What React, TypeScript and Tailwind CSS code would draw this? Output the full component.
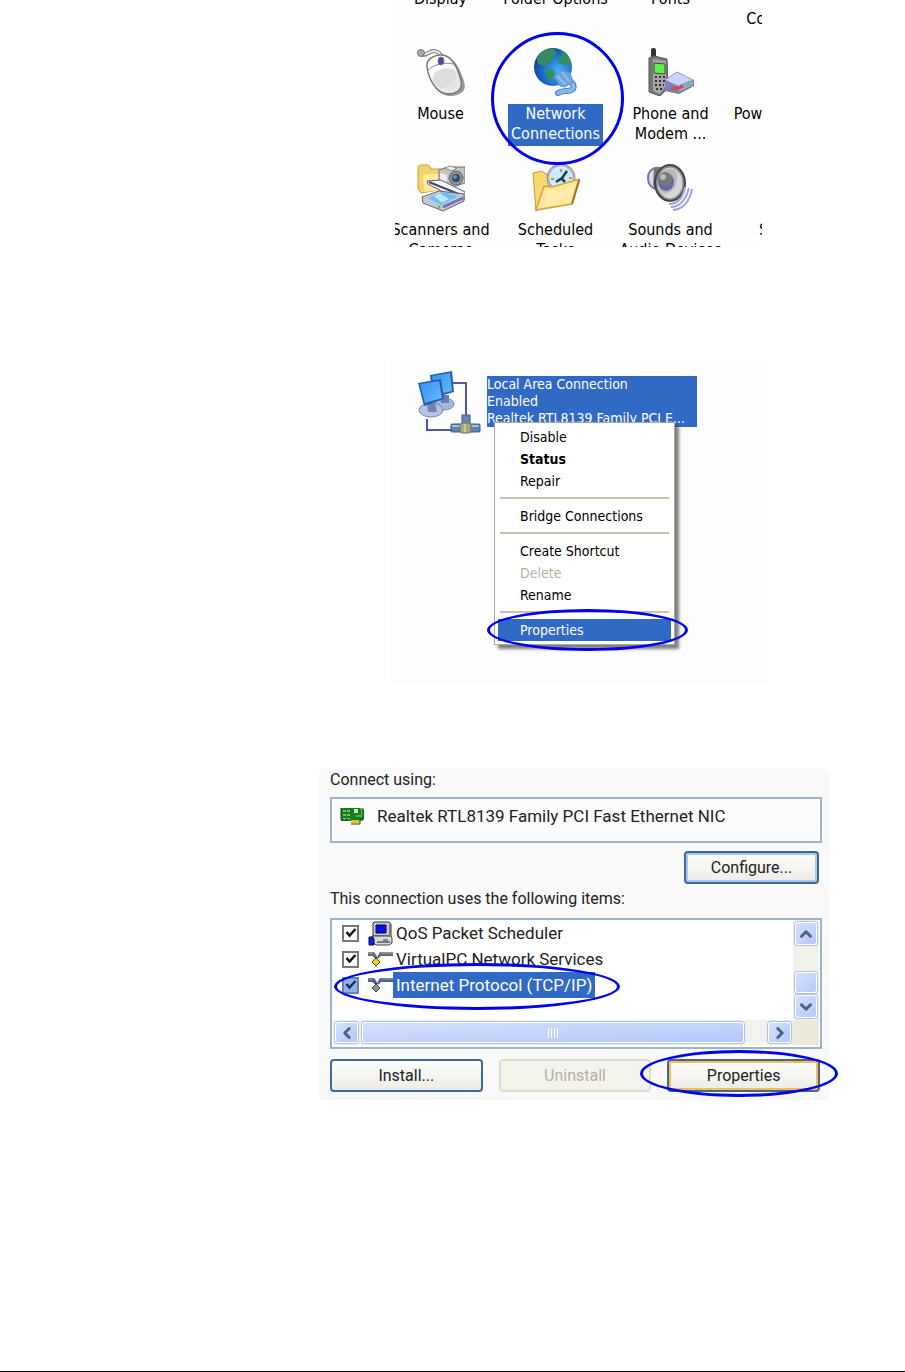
import type { ReactNode } from "react";
import { ChevronDown, ChevronLeft, ChevronRight, ChevronUp } from "lucide-react";
import { clsx } from "clsx";

function MouseIcon() {
  return (
    <svg viewBox="0 0 48 48" className="size-12">
      <defs>
        <linearGradient id="mouseBody" x1="0" y1="0" x2="1" y2="1">
          <stop offset="0.3" stopColor="#fff" />
          <stop offset="0.8" stopColor="#e3e3e3" />
          <stop offset="1" stopColor="#fafafa" />
        </linearGradient>
      </defs>
      <path d="M4 6c4 3 7-2 12-3 5 0 8 3 9 7" fill="none" stroke="#777" strokeWidth="4" />
      <path d="M4 6c4 3 7-2 12-3 5 0 8 3 9 7" fill="none" stroke="#eee" strokeWidth="2" />
      <circle cx="4" cy="5" r="3.5" fill="#aaa" stroke="#777" />
      <path d="M11 19C9 12 16 7 24 8c9 0 14 6 18 16 4 10 6 16 0 20-7 5-18 4-23-3-4-6-6-14-8-22z" fill="#999" transform="translate(2 1)" />
      <path d="M10 19C9 12 16 7 24 7c8 0 13 6 17 16 4 10 5 16 0 20-7 5-17 3-22-3-5-6-8-14-9-21z" fill="url(#mouseBody)" stroke="#777" strokeWidth="1.5" />
      <path d="M11 22c7-6 16-8 26-6" fill="none" stroke="#888" />
      <path d="M17 36c-3-8 0-13 8-15 7-2 13 0 14 5 0 7-5 12-14 15-4 0-6-2-8-5z" fill="#ddd" />
      <ellipse cx="24" cy="13" rx="3" ry="4" fill="#4945b0" stroke="#777" />
    </svg>
  );
}

function GlobeIcon() {
  return (
    <svg viewBox="0 0 48 48" className="size-12">
      <defs>
        <radialGradient id="globe" cx="0.65" cy="0.6" r="0.65">
          <stop offset="0" stopColor="#4cb4fa" />
          <stop offset="0.6" stopColor="#1a73d2" />
          <stop offset="1" stopColor="#16479a" />
        </radialGradient>
      </defs>
      <circle cx="21" cy="19" r="19" fill="url(#globe)" />
      <path d="M5 10C9 3 15 0 22 1l3 5-5 4-1 5-6 3-7-2z" fill="#368b60" />
      <path d="M29 3c5 2 8 6 10 11l-5 5-4-4-3 1-1-5 4-3z" fill="#36925c" />
      <path d="M13 20l9 2 1 5-5 7c-3-4-5-9-5-14z" fill="#319261" />
      <path d="M34 31c6 3 9 6 7 10-4 4-9 0-15 4" fill="none" stroke="#457cb5" strokeWidth="6" strokeLinecap="round" />
      <path d="M34 31c6 3 9 6 7 10-4 4-9 0-15 4" fill="none" stroke="#86b7ea" strokeWidth="4" strokeLinecap="round" />
      <path d="M22 28l8-6 8 3 3 9-8 5-5-1z" fill="#6ba4df" stroke="#5b93d2" />
      <path d="M25 28l8 8m-3-12 7 9" stroke="#94c2ee" strokeWidth="2" />
    </svg>
  );
}

function PhoneIcon() {
  return (
    <svg viewBox="0 0 48 48" className="size-12">
      <rect x="4" y="0" width="5" height="11" rx="2" fill="#333" />
      <path d="M2 10l5-2 13 3 1 29-8 8-11-4z" fill="#777" stroke="#555" />
      <path d="M6 11l13 2v25l-6 8-7-3z" fill="#a5a5a5" />
      <path d="M7 15l11 1v10l-11-1z" fill="#5df246" stroke="#444" />
      <path d="M8 29h10M8 33h10M8 37h9M9 41h6" stroke="#333" strokeWidth="2" strokeDasharray="2 2" />
      <path d="M18 32l12-7 17 7v6L32 46l-14-3z" fill="#777a9c" />
      <path d="M18 32l12-8 16 8-15 6z" fill="#d0d2ff" stroke="#9698ce" />
      <path d="M18 33l13 5v6l-13-2z" fill="#8082bf" />
      <path d="M31 38l15-5v4l-14 7z" fill="#a0a3d4" />
      <path d="M24 41l8-1 4-2" stroke="#d64a34" strokeWidth="3" fill="none" />
      <path d="M40 37l3-1" stroke="#5ad24d" strokeWidth="3" />
    </svg>
  );
}

function ScannerIcon() {
  return (
    <svg viewBox="0 0 48 48" className="size-12">
      <path d="M1 4q0-3 3-3h7l4 4h12v20L4 29l-3-4z" fill="#f5d36b" stroke="#c9a136" />
      <path d="M6 10h20v16L7 28z" fill="#ffe99d" />
      <path d="M22 6l10-3 16 0v16l-15 5-11-5z" fill="#c5c5c5" stroke="#777" />
      <path d="M27 4l6-2 7 2-5 3z" fill="#eee" stroke="#888" />
      <path d="M23 9l7 2v12l-7-4z" fill="#eee" />
      <circle cx="39" cy="14" r="7" fill="#8c9193" stroke="#666" />
      <circle cx="39" cy="14" r="4" fill="#394754" />
      <circle cx="38" cy="13" r="2" fill="#479ad6" />
      <path d="M10 17l14-1 24 12v6l-3 4L11 20z" fill="#f6f6fb" stroke="#5c598d" />
      <path d="M12 18l32 13" stroke="#48465f" strokeWidth="2" />
      <path d="M5 33l17-6 25 3v7L26 47 6 39z" fill="#c6c6d4" stroke="#64646f" />
      <path d="M11 34l14-6 16 4-17 9z" fill="#68c1f5" />
      <path d="M17 32l8 7 7-4-9-6z" fill="#bce8ff" />
      <path d="M26 43l20-9" stroke="#7172bf" strokeWidth="3" />
      <circle cx="22" cy="43" r="1.5" fill="#4c5" />
    </svg>
  );
}

function TasksIcon() {
  return (
    <svg viewBox="0 0 48 48" className="size-12">
      <path d="M1 9l9-2 4 3 20 4-2 20-28 13z" fill="#f9d96f" stroke="#c69a37" />
      <circle cx="29" cy="14" r="14" fill="#b8bdc0" stroke="#858c91" />
      <circle cx="29" cy="14" r="11" fill="#c6ecff" stroke="#f5f5f5" />
      <path d="M29 5v3M19 15h3m15-1h3" stroke="#e6853e" strokeWidth="2" />
      <path d="M24 18l6-4 5-7M29 14l4 4" stroke="#174256" strokeWidth="2.5" fill="none" />
      <path d="M4 46l8-24 8 1 28-8-8 25z" fill="#ffe79a" stroke="#cea342" strokeWidth="1.5" />
      <path d="M16 24l9 4c9 0 12-5 19-8l-6 13-25 10z" fill="#fff1be" opacity="0.6" />
      <path d="M40 40l7-24" stroke="#987532" strokeWidth="2" />
    </svg>
  );
}

function SpeakerIcon() {
  return (
    <svg viewBox="0 0 48 48" className="size-12">
      <path d="M13 4C6 3 1 7 1 14c0 6 3 10 9 11z" fill="#d8d8e6" stroke="#7474b4" strokeWidth="2" />
      <path d="M7 5l17-5-5 37-13-16z" fill="#777" />
      <ellipse cx="23" cy="19" rx="15" ry="18" fill="#8b8b8b" stroke="#454545" strokeWidth="2" />
      <ellipse cx="23" cy="19" rx="12" ry="15" fill="#b9b9b9" stroke="#ddd" />
      <path d="M14 29c8 2 15-3 16-13 1-5-1-8-3-11 8 5 10 17 5 23-5 8-13 8-18 1z" fill="#d6d6d6" />
      <ellipse cx="19" cy="18" rx="8" ry="9" fill="#6768a8" />
      <circle cx="18" cy="15" r="7" fill="#777" />
      <circle cx="16" cy="13" r="3" fill="#bbb" />
      <path d="M22 40c9 0 14-6 16-17M24 43c10 0 15-8 18-19M26 46c11-1 17-10 19-21" fill="none" stroke="#a3a2d8" strokeWidth="2" />
    </svg>
  );
}

function LanIcon() {
  return (
    <svg viewBox="0 0 66 66" className="size-[66px]">
      <defs>
        <linearGradient id="lanScreen" x1="0" y1="0" x2="1" y2="1">
          <stop offset="0" stopColor="#3592f0" />
          <stop offset="1" stopColor="#64bbfb" />
        </linearGradient>
      </defs>
      <path d="M34 12h14v33M9 48v11h25" fill="none" stroke="#50569f" strokeWidth="2" />
      <ellipse cx="26" cy="33" rx="10" ry="6" fill="#a3b8da" stroke="#7388b7" />
      <path d="M22 24h9v8h-8z" fill="#637eb6" />
      <path d="M12 4l22-4 2 21-21 6z" fill="#285da9" />
      <path d="M14 5l18-3 2 18-18 4z" fill="url(#lanScreen)" />
      <ellipse cx="13" cy="39" rx="12" ry="7" fill="#b3c4df" stroke="#7388b7" />
      <path d="M9 32h8l2 9h-9z" fill="#6f83b5" />
      <path d="M0 12l23-4 3 20-20 7z" fill="#295ca6" />
      <path d="M2 13l19-3 3 17-17 5z" fill="url(#lanScreen)" />
      <rect x="44" y="44" width="8" height="12" fill="#6588b4" stroke="#3d5b85" />
      <rect x="33" y="53" width="29" height="8" rx="1" fill="#5d83b3" stroke="#385981" />
      <path d="M34 55h27" stroke="#a7c2df" strokeWidth="2" />
      <rect x="42" y="52" width="11" height="10" rx="2" fill="#a4a783" stroke="#707958" />
      <path d="M47 53v8" stroke="#d0ca9a" strokeWidth="2" />
    </svg>
  );
}

function CardIcon() {
  return (
    <svg viewBox="0 0 25 18" className="h-[18px] w-[25px] shrink-0">
      <path d="M1 1h22l1 2v9l-4 2H1z" fill="#177b20" />
      <path d="M3 3h3v2H3zm4 0h3v2H7zm-4 4h3v2H3zm4 0h3v2H7zm-4 4h3v2H3zm4 0h3v2H7z" fill="#73c45c" />
      <path d="M14 2h4v4h-4z" fill="#bdebac" />
      <path d="M20 2h2v7h-6" fill="none" stroke="#49ba3e" strokeWidth="2" />
      <path d="M11 13h9v3h-9z" fill="#e5c321" />
      <path d="M23 2v11h-3v4h-9M1 1v12h9" fill="none" stroke="#164b1b" />
    </svg>
  );
}

function SchedulerIcon() {
  return (
    <svg viewBox="0 0 25 25" className="size-[25px] shrink-0">
      <path d="M6 1h15l2 2v12H5V2z" fill="#c9c9c9" stroke="#333" />
      <path d="M8 4h10v8H8z" fill="#0716df" stroke="#000078" />
      <path d="M4 15h19l1 2v5l-3 2H8l-4-4z" fill="#dadada" stroke="#444" />
      <path d="M22 3v13M9 21h13" stroke="#777" strokeWidth="2" />
      <path d="M15 19h5" stroke="#333" />
      <path d="M1 16h4l1 2v6H1z" fill="#0824ca" stroke="#00007c" />
    </svg>
  );
}

function ProtocolIcon({ selected }: { selected?: boolean }) {
  const bar = selected ? "#50618e" : "#6b6b6b";
  return (
    <svg viewBox="0 0 25 16" className="h-4 w-[25px] shrink-0">
      <path d="M0 1h6l3 4-2 2-3-2H0z" fill={bar} />
      <path d="M12 1h13v4H13l-3 3-1-2z" fill={bar} />
      <path d="M0 2h5M13 2h12" stroke={selected ? "#8fa2c4" : "#b5b5b5"} />
      <path d="M8 6v4" stroke="#222" strokeWidth="2" />
      <path
        d="M8 7l4 4-4 4-4-4z"
        fill={selected ? "#7b9a90" : "#f0d51c"}
        stroke="#44482b"
      />
    </svg>
  );
}

function Ring({ className }: { className: string }) {
  return (
    <span
      className={clsx(
        "pointer-events-none absolute z-20 rounded-[50%] border-3 border-[#0000ee]",
        className
      )}
    />
  );
}

const folders: { lines: string[]; icon?: ReactNode; selected?: boolean }[] = [
  { lines: ["Mouse"], icon: <MouseIcon /> },
  { lines: ["Network", "Connections"], icon: <GlobeIcon />, selected: true },
  { lines: ["Phone and", "Modem ..."], icon: <PhoneIcon /> },
  { lines: ["Power Options"] },
  { lines: ["Scanners and", "Cameras"], icon: <ScannerIcon /> },
  { lines: ["Scheduled", "Tasks"], icon: <TasksIcon /> },
  { lines: ["Sounds and", "Audio Devices"], icon: <SpeakerIcon /> },
  { lines: ["Speech"] },
];

function Label({ lines, selected }: { lines: string[]; selected?: boolean }) {
  return (
    <span
      className={clsx(
        "block px-[3px] whitespace-nowrap",
        selected && "bg-[#316ac5] pb-0.5 text-white"
      )}
    >
      {lines.map((line) => (
        <span key={line} className="block">
          {line}
        </span>
      ))}
    </span>
  );
}

function ControlPanel() {
  return (
    <section className="h-[247px] w-[367px] max-w-full overflow-hidden bg-[#fefefe] text-base leading-5">
      <div className="-mt-[11px] -ml-3 grid w-[460px] grid-cols-4 text-center">
        <Label lines={["Display"]} />
        <Label lines={["Folder Options"]} />
        <Label lines={["Fonts"]} />
        <Label lines={["Game", "Controllers"]} />
      </div>
      <div className="mt-[19px] -ml-3 grid w-[460px] grid-cols-4 gap-y-5">
        {folders.map((item) => (
          <button
            key={item.lines[0]}
            className="relative flex h-24 flex-col items-center gap-2"
          >
            <span className="size-12 shrink-0">{item.icon}</span>
            <Label lines={item.lines} selected={item.selected} />
            {item.selected && <Ring className="-top-4 -left-[7px] size-[133px]" />}
          </button>
        ))}
      </div>
    </section>
  );
}

const menuGroups = [
  ["Disable", "Status", "Repair"],
  ["Bridge Connections"],
  ["Create Shortcut", "Delete", "Rename"],
  ["Properties"],
];

function ContextMenu() {
  return (
    <div
      role="menu"
      className="absolute top-[46px] left-[7px] z-10 w-[181px] border border-[#aca899] bg-white p-[3px] text-sm text-black shadow-[4px_4px_3px_#00000080]"
    >
      {menuGroups.map((group, i) => (
        <div key={group[0]}>
          {i > 0 && <hr className="mx-0.5 mt-[5px] mb-1.5 border-t-2 border-[#c5c2b2]" />}
          {group.map((item) => (
            <button
              key={item}
              role="menuitem"
              disabled={item === "Delete"}
              className={clsx(
                "relative block h-[22px] w-full pl-[22px] text-left leading-[22px]",
                item === "Status" && "font-bold",
                item === "Delete" && "text-[#b5b2a3]",
                item === "Properties" && "bg-[#316ac5] text-white"
              )}
            >
              {item}
              {item === "Properties" && (
                <Ring className="-top-2.5 -left-[11px] h-[42px] w-[201px]" />
              )}
            </button>
          ))}
        </div>
      ))}
    </div>
  );
}

function ConnectionPanel() {
  return (
    <section className="mt-[111px] flex h-[326px] w-[379px] max-w-full gap-[3px] bg-[#fdfdfd] pt-[13px] pl-[29px]">
      <LanIcon />
      <div className="relative mt-[5px] h-[51px] w-[210px] bg-[#316ac5] text-sm leading-[17px] whitespace-nowrap text-white">
        <p>Local Area Connection</p>
        <p>Enabled</p>
        <p>Realtek RTL8139 Family PCI E...</p>
        <ContextMenu />
      </div>
    </section>
  );
}

const components = [
  { id: "qos", name: "QoS Packet Scheduler", icon: <SchedulerIcon /> },
  { id: "vpc", name: "VirtualPC Network Services", icon: <ProtocolIcon /> },
  { id: "tcp", name: "Internet Protocol (TCP/IP)", icon: <ProtocolIcon selected />, selected: true },
];

const scrollButton =
  "flex shrink-0 items-center justify-center rounded-[3px] border border-white bg-linear-to-br from-[#d5e0fe] to-[#b3c9f9] text-[#4d6185] shadow-[0_0_1px_1px_#a9bfe5]";

const dialogButton =
  "relative h-[33px] rounded-[4px] border-2 border-[#3c6995] bg-linear-to-b from-white to-[#ecebe5]";

function PropertiesPanel() {
  return (
    <section className="mt-[85px] w-[519px] max-w-full pr-[9px] font-['Roboto','Liberation_Sans',sans-serif] text-base leading-[22px] text-[#222]">
      <div className="bg-[#f9f9f9] pr-[7px] pb-2 pl-[11px]">
        <h2>Connect using:</h2>
        <div className="mt-1.5 flex h-[46px] gap-3 border-2 border-[#9cb3ca] bg-[#fcfcfc] pt-2 pl-2 text-[17px]">
          <CardIcon />
          <span className="-mt-0.5">Realtek RTL8139 Family PCI Fast Ethernet NIC</span>
        </div>
        <div className="mt-2 flex justify-end pr-[3px]">
          <button className={clsx(dialogButton, "w-[135px] shadow-[inset_0_0_0_2px_#a9c6f5]")}>
            Configure...
          </button>
        </div>
        <h2 className="mt-1">This connection uses the following items:</h2>
        <div className="mt-2 h-[131px] border-2 border-[#9cb3ca] bg-white px-px">
          <div className="flex h-[100px] justify-between">
            <ul className="relative pl-[9px] text-[17px]">
              {components.map((item) => (
                <li key={item.id} className="flex h-[26px] items-center">
                  <input
                    id={item.id}
                    type="checkbox"
                    defaultChecked
                    className="peer sr-only"
                  />
                  <label htmlFor={item.id} className="flex items-center whitespace-nowrap">
                    <span
                      className={clsx(
                        "mr-[9px] flex size-[17px] items-center justify-center border-2",
                        item.selected
                          ? "border-[#6583b8] bg-[#91b1e8]"
                          : "border-[#777] bg-white"
                      )}
                    >
                      <svg viewBox="0 0 12 12" className="size-3">
                        <path
                          d="M1.5 5l3 3.5 6-6.5"
                          fill="none"
                          stroke={item.selected ? "#1b315b" : "#111"}
                          strokeWidth="2.5"
                        />
                      </svg>
                    </span>
                    {item.icon}
                    <span
                      className={clsx(
                        "px-[3px] leading-[26px]",
                        item.selected && "bg-[#316ac5] text-white"
                      )}
                    >
                      {item.name}
                    </span>
                  </label>
                </li>
              ))}
              <Ring className="top-[43px] left-px h-[47px] w-[286px]" />
            </ul>
            <div className="flex w-[26px] flex-col gap-0.5 bg-[#f2f1ec] p-0.5">
              <button aria-label="Scroll up" className={clsx(scrollButton, "h-[23px]")}>
                <ChevronUp size={18} strokeWidth={4} />
              </button>
              <div className="grow" />
              <div className={clsx(scrollButton, "h-[21px]")} />
              <button aria-label="Scroll down" className={clsx(scrollButton, "h-[23px]")}>
                <ChevronDown size={18} strokeWidth={4} />
              </button>
            </div>
          </div>
          <div className="flex h-[25px] bg-[#ece9d8]">
            <div className="flex grow gap-1 bg-[#f3f2ed] p-0.5">
              <button aria-label="Scroll left" className={clsx(scrollButton, "w-[23px]")}>
                <ChevronLeft size={18} strokeWidth={4} />
              </button>
              <div className={clsx(scrollButton, "w-[382px] gap-0.5")}>
                <span className="h-2.5 w-px bg-white" />
                <span className="h-2.5 w-px bg-white" />
                <span className="h-2.5 w-px bg-white" />
                <span className="h-2.5 w-px bg-white" />
              </div>
              <button aria-label="Scroll right" className={clsx(scrollButton, "ml-auto w-[23px]")}>
                <ChevronRight size={18} strokeWidth={4} />
              </button>
            </div>
            <div className="w-[26px]" />
          </div>
        </div>
        <div className="mt-2.5 grid grid-cols-3 gap-4 pr-0.5">
          <button className={dialogButton}>Install...</button>
          <button
            disabled
            className="h-[33px] rounded-[4px] border-2 border-[#dddccf] bg-[#f5f4ec] text-[#b2b1a5]"
          >
            Uninstall
          </button>
          <button className={clsx(dialogButton, "shadow-[inset_0_0_0_2px_#f5bd54]")}>
            Properties
            <Ring className="-top-[11px] -left-[29px] h-[47px] w-[198px]" />
          </button>
        </div>
      </div>
    </section>
  );
}

export default function App() {
  return (
    <main className="flex min-h-screen flex-col border-b border-black bg-white font-['DejaVu_Sans_Condensed','Noto_Sans',sans-serif] text-black">
      <div className="flex flex-col items-center pl-[252px]">
        <ControlPanel />
        <ConnectionPanel />
        <PropertiesPanel />
      </div>
    </main>
  );
}
